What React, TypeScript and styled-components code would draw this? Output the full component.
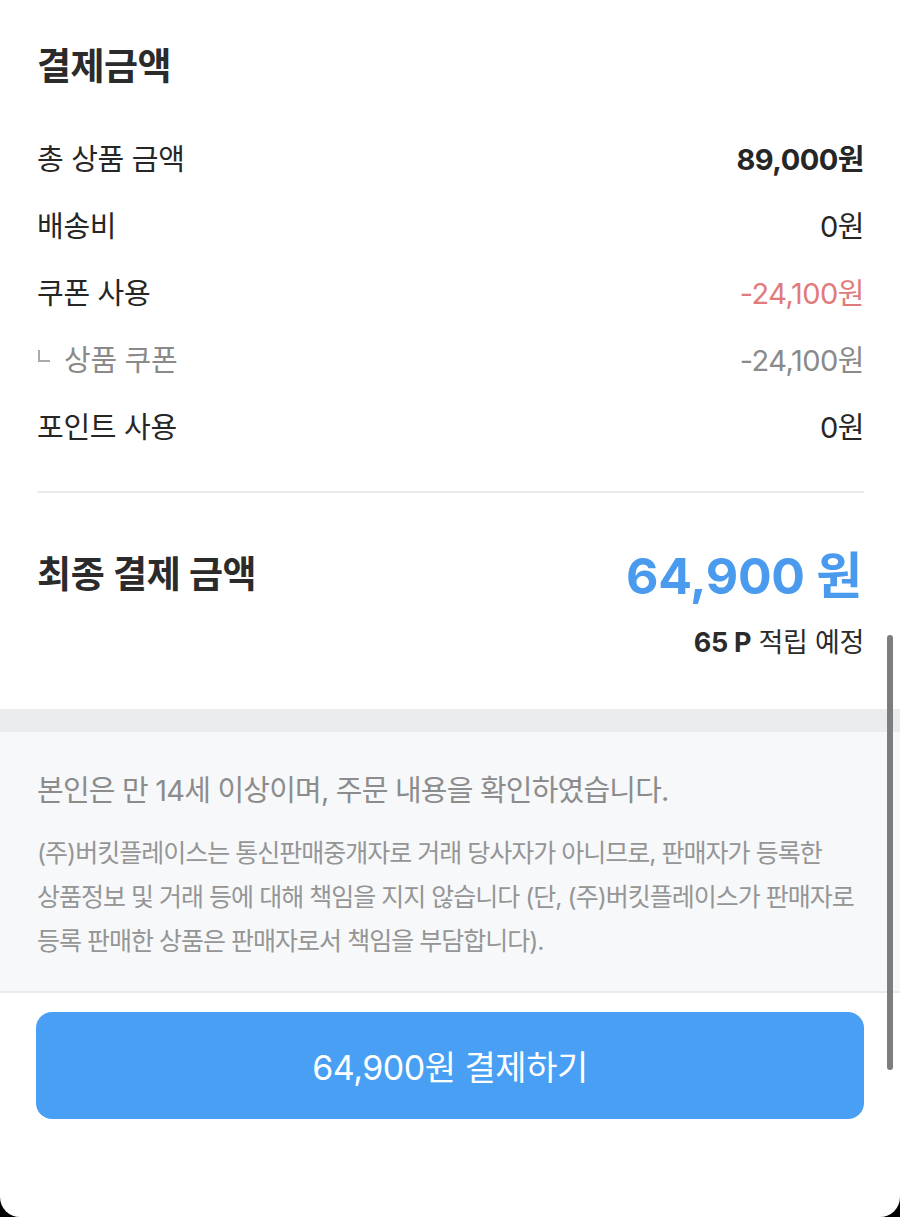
import React from 'react';
import styled, { createGlobalStyle } from 'styled-components';

const GlobalStyle = createGlobalStyle`
  html, body {
    margin: 0;
    padding: 0;
    background: #000;
  }
  body {
    font-family: Inter, "Noto Sans CJK KR", "Noto Sans", sans-serif;
    -webkit-font-smoothing: antialiased;
  }
`;

const Page = styled.div`
  position: relative;
  width: 900px;
  height: 1217px;
  background: #fff;
  border-radius: 0 0 20px 20px;
  overflow: hidden;
  display: flex;
  flex-direction: column;
`;

const Summary = styled.section`
  padding: 41px 36px 0 37px;
`;

const Title = styled.h2`
  margin: 0 0 30px;
  font-size: 37px;
  font-weight: 700;
  color: #2b2b2b;
  line-height: 52px;
  letter-spacing: -0.5px;
`;

const Row = styled.div`
  display: flex;
  justify-content: space-between;
  align-items: center;
  height: 67px;
`;

const Label = styled.span<{ $sub?: boolean }>`
  font-size: 29px;
  color: ${(p) => (p.$sub ? '#8a8a8a' : '#262626')};
  letter-spacing: -0.3px;
  display: flex;
  align-items: center;
`;

const Corner = styled.span`
  display: inline-block;
  width: 10px;
  height: 10px;
  border-left: 2px solid #aaa;
  border-bottom: 2px solid #aaa;
  margin: 0 14px 0 1px;
  transform: translateY(-2px);
`;

const Value = styled.span<{ $tone?: 'bold' | 'red' | 'gray' }>`
  font-size: 29px;
  letter-spacing: -0.5px;
  font-weight: ${(p) => (p.$tone === 'bold' ? 700 : 400)};
  color: ${(p) =>
    p.$tone === 'red' ? '#e07b7b' : p.$tone === 'gray' ? '#8a8a8a' : '#262626'};
`;

const Divider = styled.hr`
  margin: 33px 0 0;
  border: none;
  border-top: 2px solid #ebebeb;
`;

const Total = styled.div`
  display: flex;
  justify-content: space-between;
  align-items: center;
  margin-top: 43px;
`;

const TotalLabel = styled.span`
  font-size: 37px;
  font-weight: 700;
  color: #2b2b2b;
  letter-spacing: -0.3px;
`;

const TotalValue = styled.span`
  font-size: 50px;
  font-weight: 700;
  color: #4a9bee;
  letter-spacing: -0.3px;
  margin-right: 2px;
`;

const Earn = styled.div`
  text-align: right;
  margin-top: 13px;
  font-size: 27px;
  color: #2b2b2b;
  letter-spacing: -0.3px;
  b {
    font-weight: 700;
  }
`;

const Band = styled.div`
  margin-top: 49px;
  height: 23px;
  background: #ebecee;
`;

const Notice = styled.section`
  background: #f7f8fa;
  padding: 39px 37px 28px;
  border-bottom: 2px solid #e9eaec;
`;

const Agree = styled.p`
  margin: 0 0 20px;
  font-size: 29px;
  line-height: 40px;
  color: #8c8c8c;
  letter-spacing: -0.8px;
  word-break: keep-all;
`;

const Fine = styled.p`
  margin: 0;
  font-size: 25px;
  line-height: 44px;
  color: #959595;
  letter-spacing: -1px;
  word-break: keep-all;
`;

const Footer = styled.div`
  padding: 19px 36px 0;
`;

const PayButton = styled.button`
  width: 100%;
  height: 107px;
  border: none;
  border-radius: 16px;
  background: #489ff3;
  color: #fff;
  font-family: inherit;
  font-size: 34px;
  letter-spacing: -0.5px;
  cursor: pointer;
`;

const ScrollThumb = styled.div`
  position: absolute;
  right: 7px;
  top: 635px;
  width: 6px;
  height: 435px;
  border-radius: 3px;
  background: #7d7d7d;
`;

type Item = {
  label: string;
  value: string;
  tone?: 'bold' | 'red' | 'gray';
  sub?: boolean;
};

const items: Item[] = [
  { label: '총 상품 금액', value: '89,000원', tone: 'bold' },
  { label: '배송비', value: '0원' },
  { label: '쿠폰 사용', value: '-24,100원', tone: 'red' },
  { label: '상품 쿠폰', value: '-24,100원', tone: 'gray', sub: true },
  { label: '포인트 사용', value: '0원' },
];

export default function App() {
  return (
    <>
      <GlobalStyle />
      <Page>
        <Summary>
          <Title>결제금액</Title>
          {items.map((it) => (
            <Row key={it.label}>
              <Label $sub={it.sub}>
                {it.sub && <Corner />}
                {it.label}
              </Label>
              <Value $tone={it.tone}>{it.value}</Value>
            </Row>
          ))}
          <Divider />
          <Total>
            <TotalLabel>최종 결제 금액</TotalLabel>
            <TotalValue>64,900 원</TotalValue>
          </Total>
          <Earn>
            <b>65 P</b> 적립 예정
          </Earn>
        </Summary>
        <Band />
        <Notice>
          <Agree>본인은 만 14세 이상이며, 주문 내용을 확인하였습니다.</Agree>
          <Fine>
            (주)버킷플레이스는 통신판매중개자로 거래 당사자가 아니므로, 판매자가 등록한
            상품정보 및 거래 등에 대해 책임을 지지 않습니다 (단, (주)버킷플레이스가 판매자로
            등록 판매한 상품은 판매자로서 책임을 부담합니다).
          </Fine>
        </Notice>
        <Footer>
          <PayButton>64,900원 결제하기</PayButton>
        </Footer>
        <ScrollThumb />
      </Page>
    </>
  );
}
